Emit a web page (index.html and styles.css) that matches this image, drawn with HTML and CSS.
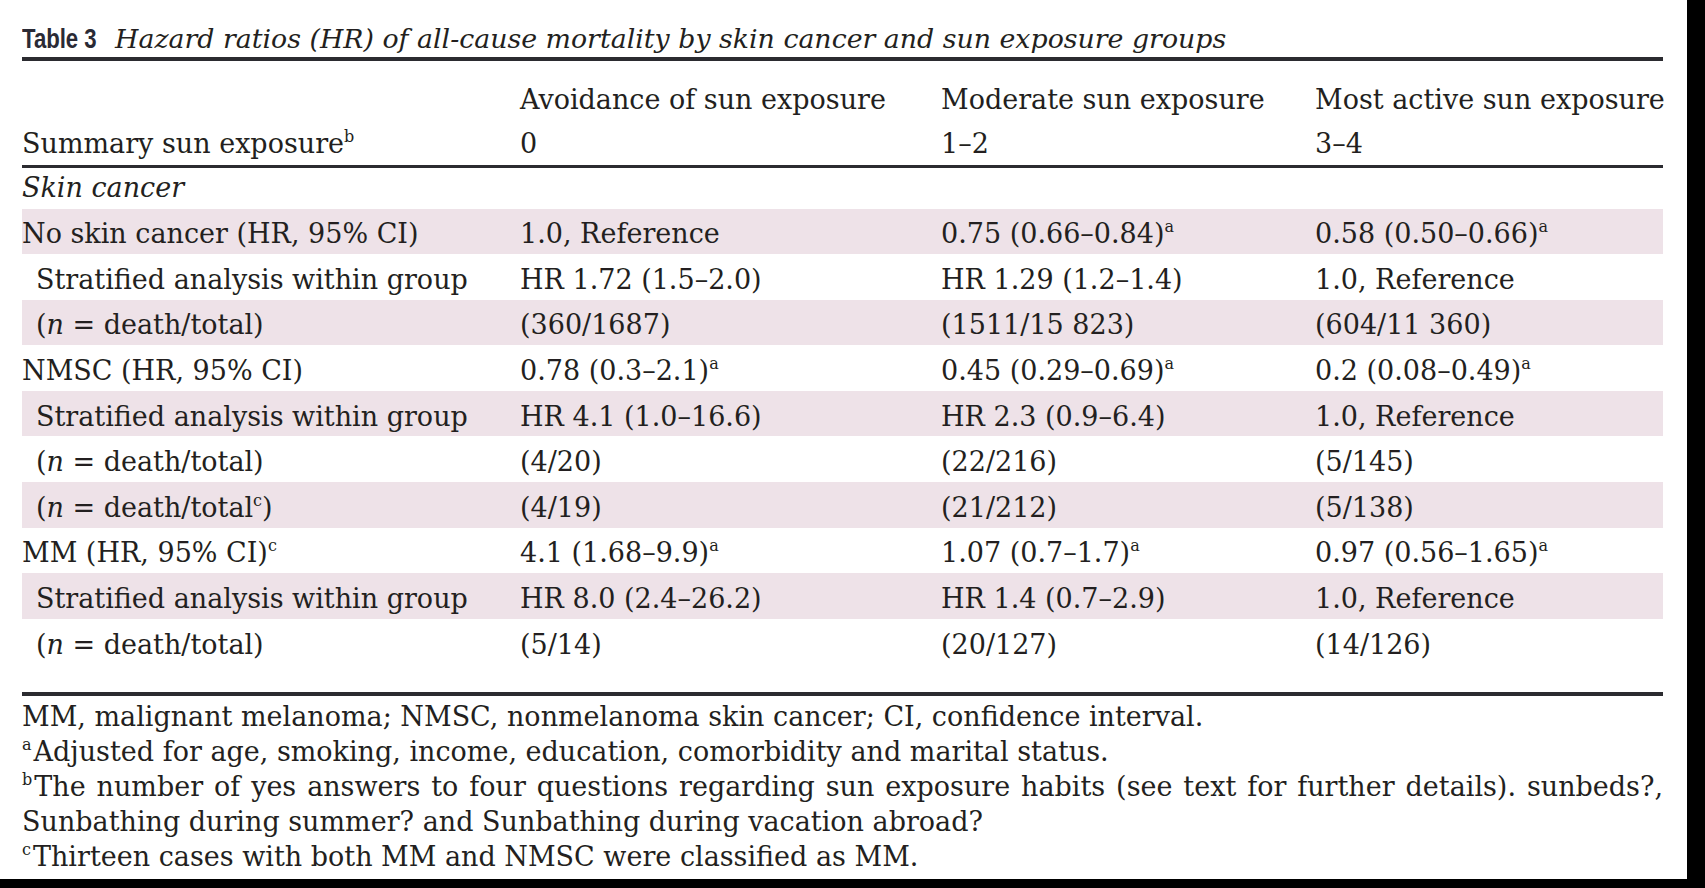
FILE: index.html
```html
<!DOCTYPE html>
<html lang="en">
<head>
<meta charset="utf-8">
<title>Table 3</title>
<link rel="stylesheet" href="styles.css">
</head>
<body>
<div class="page">
  <div class="sheet">
    <div class="title"><span class="label">Table 3</span><span class="caption">Hazard ratios (HR) of all-cause mortality by skin cancer and sun exposure groups</span></div>
    <table class="hr-table">
      <colgroup>
        <col class="c1"><col class="c2"><col class="c3"><col class="c4">
      </colgroup>
      <thead>
        <tr class="h1">
          <th></th>
          <th>Avoidance of sun exposure</th>
          <th>Moderate sun exposure</th>
          <th>Most active sun exposure</th>
        </tr>
        <tr class="h2">
          <th>Summary sun exposure<sup>b</sup></th>
          <th>0</th>
          <th>1–2</th>
          <th>3–4</th>
        </tr>
      </thead>
      <tbody>
        <tr class="section"><td colspan="4"><em>Skin cancer</em></td></tr>
        <tr class="shade"><td>No skin cancer (HR, 95% CI)</td><td>1.0, Reference</td><td>0.75 (0.66–0.84)<sup>a</sup></td><td>0.58 (0.50–0.66)<sup>a</sup></td></tr>
        <tr><td class="ind">Stratified analysis within group</td><td>HR 1.72 (1.5–2.0)</td><td>HR 1.29 (1.2–1.4)</td><td>1.0, Reference</td></tr>
        <tr class="shade"><td class="ind">(<i>n</i> = death/total)</td><td>(360/1687)</td><td>(1511/15 823)</td><td>(604/11 360)</td></tr>
        <tr><td>NMSC (HR, 95% CI)</td><td>0.78 (0.3–2.1)<sup>a</sup></td><td>0.45 (0.29–0.69)<sup>a</sup></td><td>0.2 (0.08–0.49)<sup>a</sup></td></tr>
        <tr class="shade"><td class="ind">Stratified analysis within group</td><td>HR 4.1 (1.0–16.6)</td><td>HR 2.3 (0.9–6.4)</td><td>1.0, Reference</td></tr>
        <tr><td class="ind">(<i>n</i> = death/total)</td><td>(4/20)</td><td>(22/216)</td><td>(5/145)</td></tr>
        <tr class="shade"><td class="ind">(<i>n</i> = death/total<sup>c</sup>)</td><td>(4/19)</td><td>(21/212)</td><td>(5/138)</td></tr>
        <tr><td>MM (HR, 95% CI)<sup>c</sup></td><td>4.1 (1.68–9.9)<sup>a</sup></td><td>1.07 (0.7–1.7)<sup>a</sup></td><td>0.97 (0.56–1.65)<sup>a</sup></td></tr>
        <tr class="shade"><td class="ind">Stratified analysis within group</td><td>HR 8.0 (2.4–26.2)</td><td>HR 1.4 (0.7–2.9)</td><td>1.0, Reference</td></tr>
        <tr><td class="ind">(<i>n</i> = death/total)</td><td>(5/14)</td><td>(20/127)</td><td>(14/126)</td></tr>
      </tbody>
    </table>
    <div class="notes">
      <p>MM, malignant melanoma; NMSC, nonmelanoma skin cancer; CI, confidence interval.</p>
      <p><sup>a</sup>Adjusted for age, smoking, income, education, comorbidity and marital status.</p>
      <p class="just"><sup>b</sup>The number of yes answers to four questions regarding sun exposure habits (see text for further details). sunbeds?, Sunbathing during summer? and Sunbathing during vacation abroad?</p>
      <p><sup>c</sup>Thirteen cases with both MM and NMSC were classified as MM.</p>
    </div>
  </div>
</div>
</body>
</html>
```
FILE: styles.css
```css
html, body {
  margin: 0;
  padding: 0;
  background: #000;
}
.page {
  width: 1687px;
  height: 879px;
  background: #fff;
  overflow: hidden;
}
.sheet {
  width: 1641px;
  margin-left: 22px;
  padding-top: 22px;
  font-family: "DejaVu Serif", "Liberation Serif", serif;
  font-size: 27px;
  color: #231f20;
}
.title {
  display: flex;
  align-items: baseline;
  gap: 2px;
  height: 33px;
  line-height: 33px;
  border-bottom: 4px solid #2b2b30;
  padding-bottom: 2px;
}
.title .label {
  display: inline-block;
  font-family: "Liberation Sans", "Arial", sans-serif;
  font-weight: bold;
  font-size: 27px;
  color: #2a2a35;
  transform: scaleX(0.82);
  transform-origin: left center;
}
.title .caption {
  font-style: italic;
  font-size: 26.8px;
}
.hr-table {
  width: 1641px;
  border-collapse: collapse;
  table-layout: fixed;
  margin-top: 16px;
}
.c1 { width: 498px; }
.c2 { width: 421px; }
.c3 { width: 374px; }
.c4 { width: 348px; }
.hr-table th {
  font-weight: normal;
  text-align: left;
  padding: 0;
  white-space: nowrap;
  height: 44px;
  vertical-align: middle;
}
.hr-table thead tr.h2 th {
  border-bottom: 3px solid #2b2b30;
}
.hr-table td {
  box-sizing: border-box;
  padding: 6px 0 0 0;
  height: 45.6px;
  line-height: 38px;
  white-space: nowrap;
  vertical-align: middle;
}
.hr-table tr.section td {
  height: 42px;
  padding-top: 0;
}
.hr-table tr.shade td {
  background: #eee2e8;
}
.hr-table td.ind {
  padding-left: 14px;
}
sup {
  font-size: 16px;
  line-height: 0;
  vertical-align: 11px;
}
.notes {
  margin-top: 28px;
  border-top: 4px solid #2b2b30;
  padding-top: 3px;
}
.notes p {
  margin: 0;
  line-height: 35px;
}
.notes sup {
  margin-right: 2px;
}
.notes p.just {
  text-align: justify;
}
```
